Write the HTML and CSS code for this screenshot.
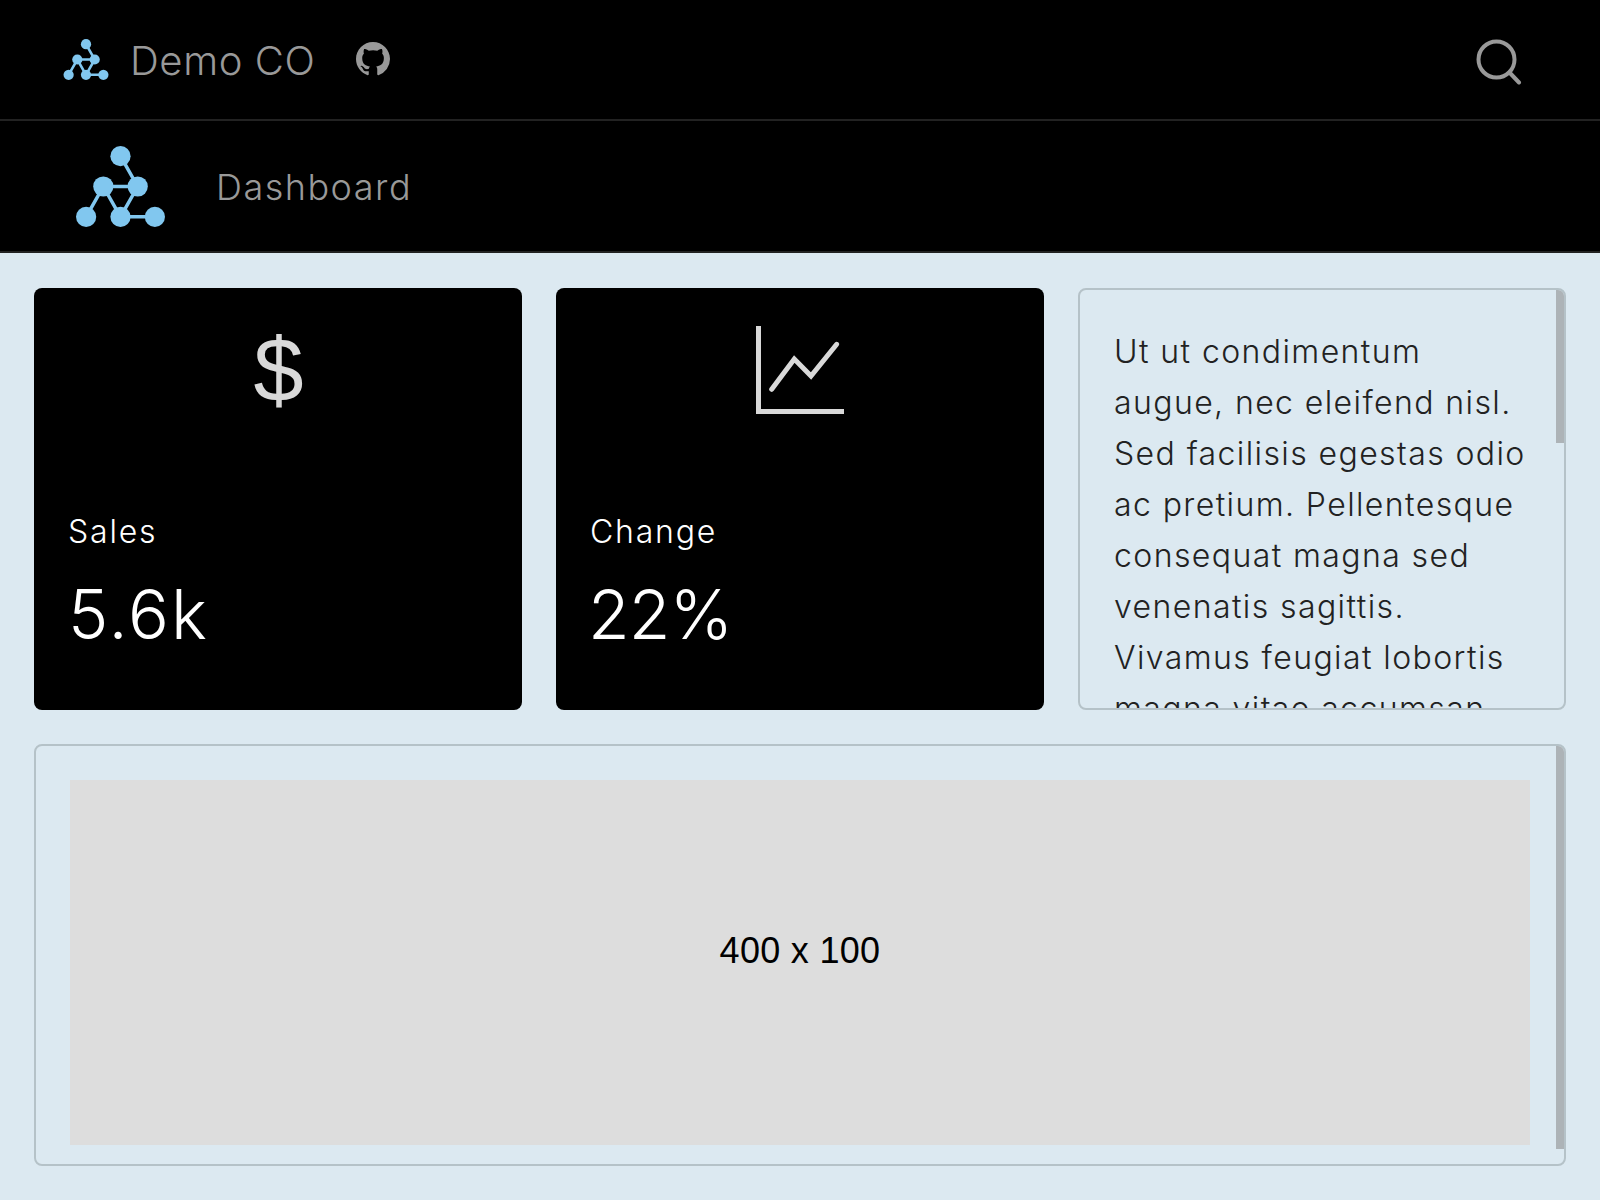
FILE: index.html
```html
<!DOCTYPE html>
<html lang="en">
<head>
<meta charset="utf-8">
<title>Demo CO</title>
<link rel="stylesheet" href="styles.css">
</head>
<body>
<header class="topbar">
  <svg class="logo-small" viewBox="0 0 90 80"><g class="logo-lines"><path d="M45 10 62 40M28 40H62M28 40 11 70M28 40 45 70M62 40 45 70M45 70H79"/></g><g class="logo-dots"><circle cx="45" cy="10" r="10"/><circle cx="28" cy="40" r="10"/><circle cx="62" cy="40" r="10"/><circle cx="11" cy="70" r="10"/><circle cx="45" cy="70" r="10"/><circle cx="79" cy="70" r="10"/></g></svg>
  <span class="brand">Demo CO</span>
  <svg class="github" viewBox="0 0 16 16"><path d="M8 0C3.58 0 0 3.58 0 8c0 3.54 2.29 6.53 5.47 7.59.4.07.55-.17.55-.38 0-.19-.01-.82-.01-1.49-2.01.37-2.53-.49-2.69-.94-.09-.23-.48-.94-.82-1.13-.28-.15-.68-.52-.01-.53.63-.01 1.08.58 1.23.82.72 1.21 1.87.87 2.33.66.07-.52.28-.87.51-1.07-1.78-.2-3.64-.89-3.64-3.95 0-.87.31-1.59.82-2.15-.08-.2-.36-1.02.08-2.12 0 0 .67-.21 2.2.82.64-.18 1.32-.27 2-.27.68 0 1.36.09 2 .27 1.53-1.04 2.2-.82 2.2-.82.44 1.1.16 1.92.08 2.12.51.56.82 1.27.82 2.15 0 3.07-1.87 3.75-3.65 3.95.29.25.54.73.54 1.48 0 1.07-.01 1.93-.01 2.2 0 .21.15.46.55.38A8.013 8.013 0 0016 8c0-4.42-3.58-8-8-8z"/></svg>
  <svg class="search" viewBox="0 0 46 46"><circle cx="20.5" cy="20.5" r="18"/><path d="M33.5 33.5 43 43.5"/></svg>
</header>
<nav class="subbar">
  <svg class="logo-large" viewBox="0 0 90 80"><g class="logo-lines"><path d="M45 10 62 40M28 40H62M28 40 11 70M28 40 45 70M62 40 45 70M45 70H79"/></g><g class="logo-dots"><circle cx="45" cy="10" r="10"/><circle cx="28" cy="40" r="10"/><circle cx="62" cy="40" r="10"/><circle cx="11" cy="70" r="10"/><circle cx="45" cy="70" r="10"/><circle cx="79" cy="70" r="10"/></g></svg>
  <span class="page-title">Dashboard</span>
</nav>
<main class="grid">
  <section class="stat">
    <div class="stat-icon"><span class="dollar">$</span></div>
    <div class="stat-label">Sales</div>
    <div class="stat-value stat-value-open">5.6k</div>
  </section>
  <section class="stat">
    <div class="stat-icon"><svg class="chart" viewBox="0 0 88 88"><path class="axis" d="M2.500 0V85.500H88"/><path class="trend" d="M15.700 63.300 38.300 33 55 50 80.700 18.300"/></svg></div>
    <div class="stat-label">Change</div>
    <div class="stat-value stat-value-tight">22%</div>
  </section>
  <section class="panel panel-text">
    <p class="copy">Ut ut condimentum<br>augue, nec eleifend nisl.<br>Sed facilisis egestas odio<br>ac pretium. Pellentesque<br>consequat magna sed<br>venenatis sagittis.<br>Vivamus feugiat lobortis<br>magna vitae accumsan</p>
  </section>
  <section class="panel panel-wide">
    <div class="placeholder">400 x 100</div>
  </section>
</main>
</body>
</html>
```
FILE: styles.css
```css
* { box-sizing: border-box; }
html, body { margin: 0; height: 100%; }
body {
  background: #dce9f1;
  font-family: "Inter", "Noto Sans", sans-serif;
  font-weight: 300;
}
.topbar {
  height: 121px;
  background: #000;
  border-bottom: 2px solid #222;
  display: flex;
  align-items: center;
  padding: 0 78px 0 63px;
}
.logo-small { width: 46px; height: 41px; margin-right: 21px; }
.logo-large { width: 91px; height: 81px; margin-right: 50px; }
.logo-lines path { fill: none; stroke: #81c7ef; stroke-width: 3.500; }
.logo-small .logo-lines path { stroke-width: 5; }
.logo-dots circle { fill: #81c7ef; }
.brand {
  font-size: 40px;
  color: #999;
  margin: 2px 40px 0 0;
  letter-spacing: 0.600px;
}
.github { width: 34px; height: 34px; fill: #999; margin-top: -2px; }
.search {
  width: 46px; height: 46px;
  margin-left: auto;
  margin-top: 4px;
  fill: none;
  stroke: #999;
  stroke-width: 4;
  stroke-linecap: round;
}
.subbar {
  height: 132px;
  background: #000;
  border-bottom: 2px solid #222;
  display: flex;
  align-items: center;
  padding: 0 0 0 75px;
}
.page-title { font-size: 36px; color: #999; letter-spacing: 1.500px; margin-top: 1px; }
.grid {
  display: grid;
  grid-template-columns: repeat(3, 488px);
  grid-template-rows: 422px 422px;
  gap: 34px;
  padding: 35px 34px 0;
}
.stat {
  background: #000;
  border-radius: 8px;
  padding: 34px;
  color: #fff;
}
.stat-icon {
  height: 96px;
  display: flex;
  justify-content: center;
  align-items: center;
}
.dollar {
  font-family: "Liberation Sans", sans-serif;
  font-weight: 400;
  font-size: 90px;
  line-height: 96px;
  color: #d9d9d9;
  margin-left: 1px;
}
.chart { width: 88px; height: 88px; fill: none; stroke: #d9d9d9; stroke-width: 5; }
.trend { stroke-linecap: round; }
.stat-label { margin-top: 96px; font-size: 32px; line-height: 36px; letter-spacing: 1.800px; }
.stat-value { margin-top: 24px; font-size: 68px; line-height: 80px; }
.stat-value-open { letter-spacing: 2px; }
.stat-value-tight { letter-spacing: -1px; margin-left: -2px; }
.panel {
  position: relative;
  border: 2px solid #b5c2c8;
  border-radius: 8px;
  overflow: hidden;
  padding: 34px;
  color: #222;
}
.panel::after {
  content: "";
  position: absolute;
  top: 0;
  right: 0;
  width: 8px;
  background: #adb3b7;
}
.panel-text::after { height: 153px; }
.panel-wide::after { height: 403px; }
.panel-text { padding-top: 36px; }
.panel-wide { grid-column: 1 / -1; }
.copy { margin: 0; font-size: 32px; line-height: 51px; white-space: nowrap; letter-spacing: 1.400px; }
.placeholder {
  height: 365px;
  padding-bottom: 24px;
  background: #ddd;
  color: #000;
  display: flex;
  align-items: center;
  justify-content: center;
  font-family: "Liberation Sans", sans-serif;
  font-weight: 400;
  font-size: 36px;
  letter-spacing: 0.300px;
}
```
